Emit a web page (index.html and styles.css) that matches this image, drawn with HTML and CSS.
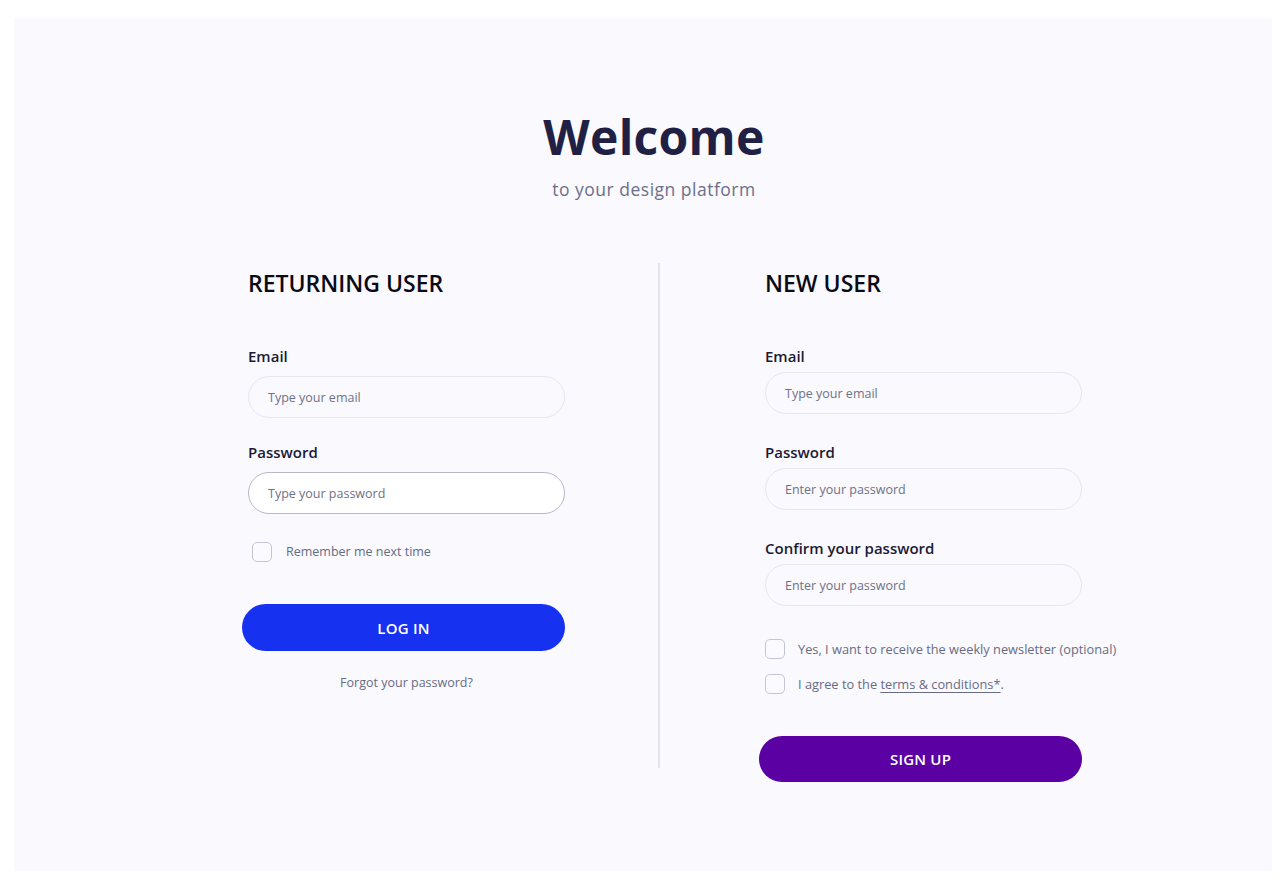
FILE: index.html
```html
<!DOCTYPE html>
<html lang="en">
<head>
<meta charset="utf-8">
<title>Welcome</title>
<link rel="stylesheet" href="styles.css">
</head>
<body>
<main class="panel">
  <header class="hero">
    <h1 class="hero-title">Welcome</h1>
    <p class="hero-sub">to your design platform</p>
  </header>
  <section class="columns">
    <div class="col col-left">
      <h2 class="col-title">RETURNING USER</h2>
      <div class="field field-first field-wide">
        <label class="field-label">Email</label>
        <input class="field-input" type="text" placeholder="Type your email">
      </div>
      <div class="field field-wide">
        <label class="field-label">Password</label>
        <input class="field-input field-focus" type="password" placeholder="Type your password">
      </div>
      <label class="check check-remember">
        <span class="check-box"></span>
        <span class="check-text">Remember me next time</span>
      </label>
      <button class="btn btn-login">LOG IN</button>
      <a class="forgot">Forgot your password?</a>
    </div>
    <div class="divider"></div>
    <div class="col col-right">
      <h2 class="col-title">NEW USER</h2>
      <div class="field field-first">
        <label class="field-label">Email</label>
        <input class="field-input" type="text" placeholder="Type your email">
      </div>
      <div class="field">
        <label class="field-label">Password</label>
        <input class="field-input" type="password" placeholder="Enter your password">
      </div>
      <div class="field">
        <label class="field-label">Confirm your password</label>
        <input class="field-input" type="password" placeholder="Enter your password">
      </div>
      <label class="check check-news">
        <span class="check-box"></span>
        <span class="check-text">Yes, I want to receive the weekly newsletter (optional)</span>
      </label>
      <label class="check check-terms">
        <span class="check-box"></span>
        <span class="check-text">I agree to the <a class="terms">terms &amp; conditions*</a>.</span>
      </label>
      <button class="btn btn-signup">SIGN UP</button>
    </div>
  </section>
</main>
</body>
</html>
```
FILE: styles.css
```css
* { box-sizing: border-box; }
html, body { margin: 0; padding: 0; background: #ffffff; }
body {
  font-family: "Open Sans", "Noto Sans", "Liberation Sans", sans-serif;
  color: #1c1a33;
}
.panel {
  margin: 18px 13px 0 14px;
  height: 853px;
  background: #f9f9fe;
  padding-top: 91px;
}
.hero { text-align: center; padding-left: 22px; }
.hero-title {
  margin: 0;
  font-size: 48px;
  line-height: 56px;
  font-weight: 700;
  color: #221f45;
  letter-spacing: 0.3px;
}
.hero-sub {
  margin: 12px 0 0;
  font-size: 17.5px;
  line-height: 24px;
  color: #6c6f8a;
  letter-spacing: 0.5px;
}
.columns {
  margin-top: 62px;
  display: flex;
  padding-left: 234px;
}
.col { display: flex; flex-direction: column; width: 317px; padding-top: 5px; }
.col-left { margin-right: 93px; }
.col-right { margin-left: 105px; }
.divider { width: 2px; height: 505px; background: #e4e4ee; }
.col-title {
  margin: 0;
  font-size: 23px;
  line-height: 30px;
  font-weight: 600;
  color: #0a0a14;
}
.field { display: flex; flex-direction: column; margin-top: 27px; }
.field-first { margin-top: 47px; }
.col-left .field + .field { margin-top: 23px; }
.field-label {
  font-size: 15px;
  line-height: 22px;
  font-weight: 600;
  color: #1c1a33;
  margin-bottom: 5px;
}
.field-wide .field-label { margin-bottom: 9px; }
.field-input {
  width: 317px;
  height: 42px;
  border: 1px solid #e8e7f1;
  border-radius: 21px;
  background: #f9f9fe;
  padding: 0 19px;
  font-family: inherit;
  font-size: 12.5px;
  color: #6f7189;
  outline: none;
}
.field-input::placeholder { color: #6f7189; }
.field-focus { background: #ffffff; border-color: #b9b7cc; }
.check {
  display: flex;
  align-items: center;
  gap: 13px;
  font-size: 12.5px;
  line-height: 20px;
  color: #686b83;
  white-space: nowrap;
}
.check-news, .check-terms { font-size: 12.8px; }
.check-box {
  width: 20px;
  height: 20px;
  flex: none;
  border: 1px solid #c6c4da;
  border-radius: 5px;
  background: #fbfbff;
}
.check-remember { margin-top: 28px; padding-left: 4px; gap: 14px; }
.check-news { margin-top: 33px; }
.check-terms { margin-top: 15px; }
.terms { color: #686b83; text-decoration: underline; text-underline-offset: 3px; }
.btn {
  width: 323px;
  height: 47px;
  margin-left: -6px;
  border: none;
  border-radius: 24px;
  color: #ffffff;
  font-family: inherit;
  font-size: 15px;
  font-weight: 600;
  letter-spacing: 0.2px;
}
.btn-login { background: #1631f0; margin-top: 42px; }
.btn-signup { background: #5b00a3; margin-top: 42px; height: 46px; }
.forgot {
  margin-top: 23px;
  text-align: center;
  font-size: 12.5px;
  line-height: 18px;
  color: #686b83;
}
```
